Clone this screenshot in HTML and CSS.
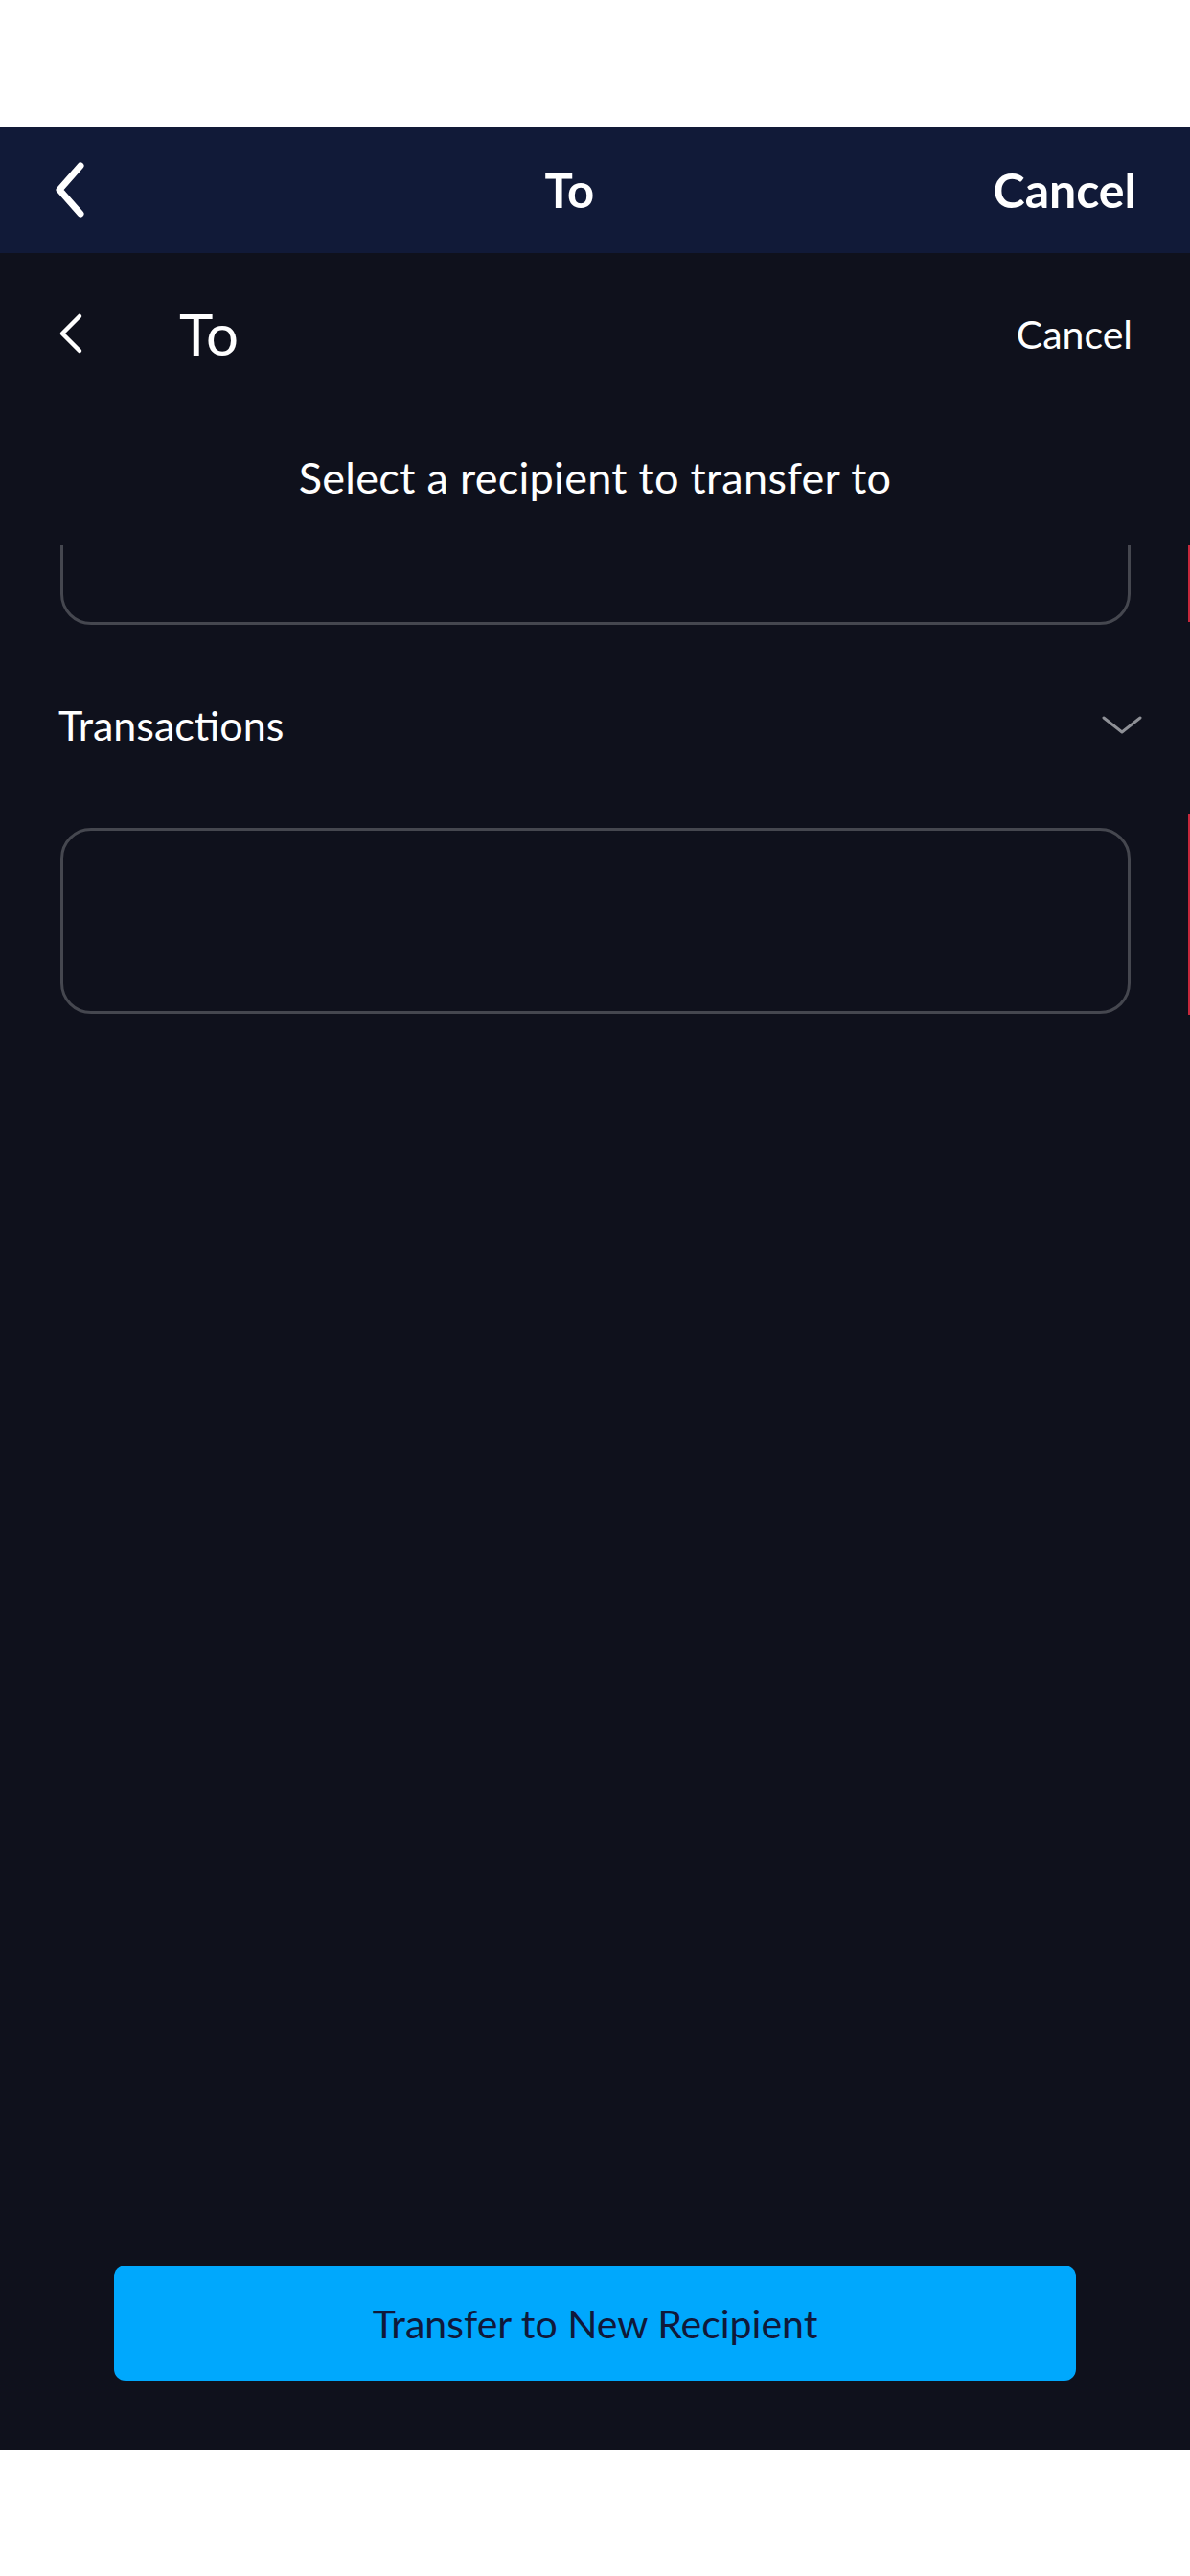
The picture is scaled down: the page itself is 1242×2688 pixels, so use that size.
FILE: index.html
```html
<!DOCTYPE html>
<html lang="en">
<head>
<meta charset="utf-8">
<title>To</title>
<link rel="stylesheet" href="styles.css">
</head>
<body>
<div class="status-space"></div>
<header class="navbar">
  <div class="nav-back">
    <svg width="44" height="70" viewBox="0 0 44 70"><path d="M34 10 L12 35 L34 60" fill="none" stroke="#ffffff" stroke-width="7" stroke-linecap="round" stroke-linejoin="round"/></svg>
  </div>
  <div class="nav-title">To</div>
  <div class="nav-cancel">Cancel</div>
</header>
<main class="screen">
  <div class="screen-header">
    <div class="screen-back">
      <svg width="30" height="44" viewBox="0 0 30 44"><path d="M22 4 L4 22 L22 40" fill="none" stroke="#ffffff" stroke-width="4.5" stroke-linecap="round" stroke-linejoin="round"/></svg>
    </div>
    <div class="screen-title">To</div>
    <div class="screen-cancel">Cancel</div>
  </div>
  <p class="subtitle">Select a recipient to transfer to</p>
  <div class="list-clip">
    <div class="item item-first">
      <div class="card"></div>
      <div class="swipe-action"></div>
    </div>
  </div>
  <div class="section-row">
    <span class="section-label">Transactions</span>
    <svg class="section-chevron" width="46" height="24" viewBox="0 0 46 24"><path d="M4 4 L23 19 L42 4" fill="none" stroke="#8e9096" stroke-width="3" stroke-linecap="round" stroke-linejoin="round"/></svg>
  </div>
  <div class="list">
    <div class="item">
      <div class="card"></div>
      <div class="swipe-action"></div>
    </div>
  </div>
  <div class="spacer"></div>
  <button class="primary-btn">Transfer to New Recipient</button>
</main>
<div class="bottom-space"></div>
</body>
</html>
```
FILE: styles.css
```css
* { box-sizing: border-box; }
html, body { margin: 0; padding: 0; background: #ffffff; }
body {
  width: 1242px;
  font-family: Lato, "Noto Sans", sans-serif;
  color: #ffffff;
  overflow-x: hidden;
}
.status-space { height: 132px; background: #ffffff; }
.navbar {
  height: 132px;
  background: #111a38;
  display: flex;
  align-items: center;
  padding: 0 56px 0 50px;
}
.nav-back { width: 44px; height: 70px; display: flex; }
.nav-title {
  flex: 1;
  text-align: center;
  font-size: 49px;
  font-weight: 700;
  padding-left: 58px;
}
.nav-cancel { font-size: 50px; font-weight: 700; }

.screen {
  height: 2292px;
  background: #0f111c;
  display: flex;
  flex-direction: column;
  overflow: hidden;
}
.screen-header {
  height: 168px;
  display: flex;
  align-items: center;
  padding: 0 60px 0 61px;
}
.screen-back { width: 30px; height: 44px; display: flex; }
.screen-title {
  margin-left: 96px;
  font-size: 60px;
  flex: 1;
}
.screen-cancel { font-size: 41px; }
.subtitle {
  margin: 36px 0 0;
  height: 60px;
  line-height: 60px;
  text-align: center;
  font-size: 45px;
  letter-spacing: 0.3px;
}
.list-clip {
  margin-top: 41px;
  height: 84px;
  overflow: hidden;
  display: flex;
  flex-direction: column;
  justify-content: flex-end;
}
.item {
  flex: 0 0 auto;
  height: 210px;
  display: flex;
  align-items: flex-start;
  padding-left: 63px;
}
.card {
  flex: 0 0 1117px;
  height: 194px;
  margin-top: 15px;
  border: 3px solid #45474f;
  border-radius: 32px;
}
.swipe-action {
  flex: 0 0 200px;
  height: 210px;
  margin-left: 60px;
  background: #c8283c;
}
.item-first .swipe-action { height: 206px; }
.section-row {
  height: 196px;
  display: flex;
  align-items: center;
  justify-content: space-between;
  padding: 12px 48px 0 61px;
}
.section-label { font-size: 43px; line-height: 60px; }
.section-chevron { display: block; }
.list { display: flex; flex-direction: column; }
.spacer { flex: 1; }
.primary-btn {
  flex: 0 0 120px;
  margin: 0 119px 72px;
  border: none;
  border-radius: 12px;
  background: #00a8fd;
  color: #10193a;
  font-family: Lato, "Noto Sans", sans-serif;
  font-size: 41px;
}
.bottom-space { height: 132px; background: #ffffff; }
```
